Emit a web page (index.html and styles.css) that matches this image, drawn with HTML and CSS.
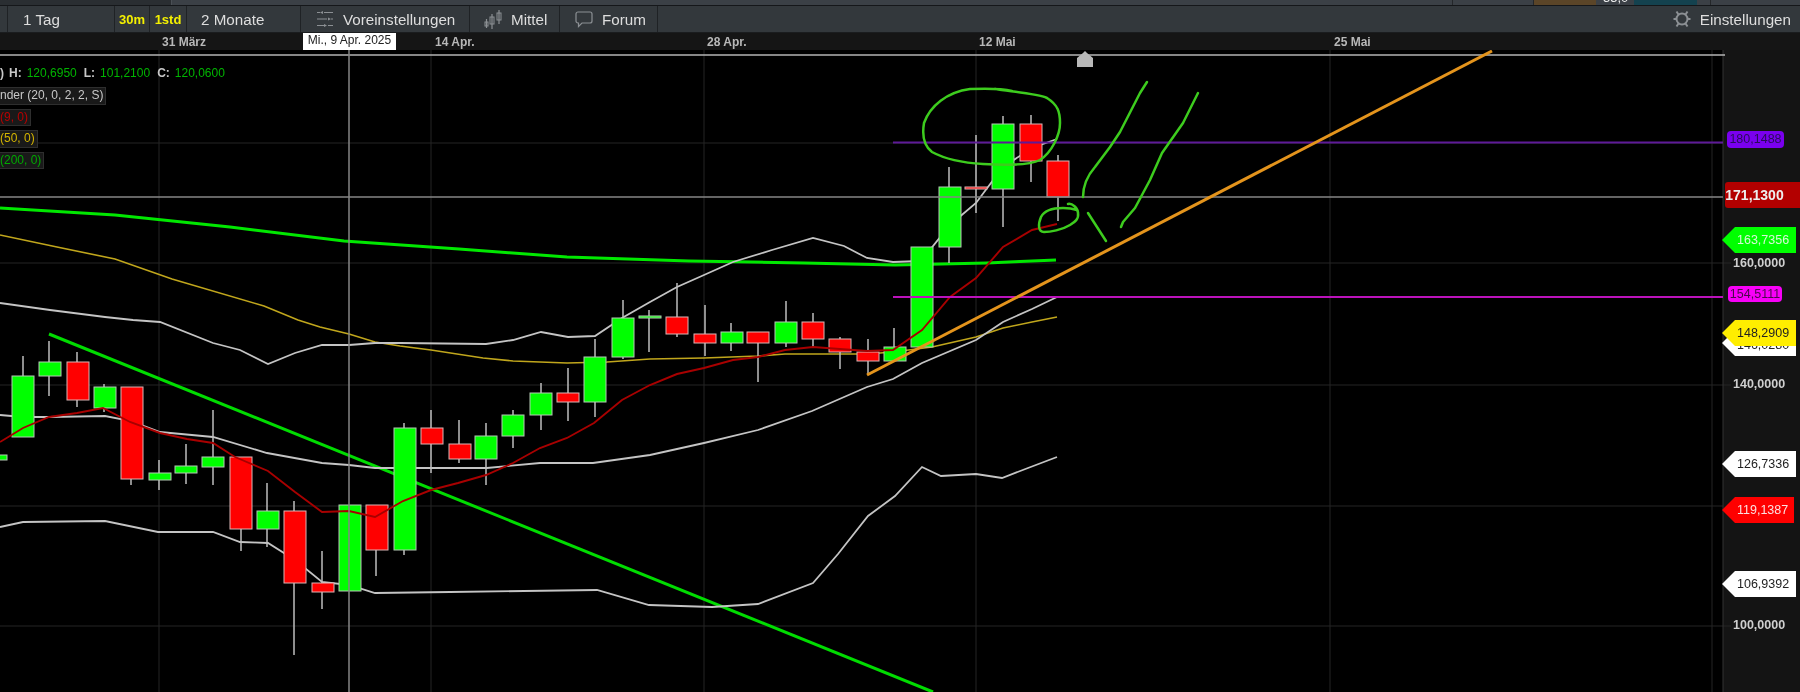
FILE: index.html
```html
<!DOCTYPE html>
<html lang="de">
<head>
    <meta charset="UTF-8">
    <title>Chart</title>
    <link rel="stylesheet" href="styles.css">
</head>
<body>

<div class="top-strip">
    <div class="strip-dark"></div>
    <div class="strip-cell strip-wide"></div>
    <div class="strip-cell strip-gap"></div>
    <div class="strip-brown"></div>
    <div class="strip-value"><span>55,0</span></div>
    <div class="strip-teal"></div>
    <div class="strip-cell strip-end"></div>
</div>

<div class="toolbar">
    <div class="tool tool-first"></div>
    <div class="tool tool-day">1 Tag</div>
    <div class="tool tool-short">30m</div>
    <div class="tool tool-hour">1std</div>
    <div class="tool tool-range">2 Monate</div>
    <div class="tool tool-presets">
        <svg class="icon" width="18" height="18" viewBox="0 0 18 18">
            <path d="M1 2.500h3M8 2.500h9M1 9h10M15 9h2M1 15.500h7M12 15.500h5" />
            <path class="fill" d="M7 1l-3 1.500 3 1.500zM12 7.500l3 1.500-3 1.500zM8 14l3 1.500-3 1.500z" />
        </svg>
        Voreinstellungen
    </div>
    <div class="tool tool-size">
        <svg class="icon" width="18" height="20" viewBox="0 0 18 20">
            <path d="M2.500 10v9M8 5v15M15 1v14" />
            <rect class="body" x="1" y="13" width="3" height="4" />
            <rect class="body" x="6" y="8" width="4" height="7" />
            <rect class="body" x="13" y="4" width="4" height="7" />
        </svg>
        Mittel
    </div>
    <div class="tool tool-forum">
        <svg class="icon" width="18" height="18" viewBox="0 0 18 18">
            <path d="M3 2h12a2 2 0 0 1 2 2v7a2 2 0 0 1-2 2H7l-3.500 3.500V13H3a2 2 0 0 1-2-2V4a2 2 0 0 1 2-2z" />
        </svg>
        Forum
    </div>
    <div class="tool-spacer"></div>
    <div class="settings">
        <svg class="icon gear" width="18" height="18" viewBox="0 0 18 18">
            <circle cx="9" cy="9" r="5.500" />
            <path d="M3.500 1.500l2 3M14.500 1.500l-2 3M3.500 16.500l2-3M14.500 16.500l-2-3M0.500 9h3M14.500 9h3" />
        </svg>
        Einstellungen
    </div>
</div>

<div class="time-axis">
    <span class="tick tick-mar">31 März</span>
    <span class="tick tick-apr14">14 Apr.</span>
    <span class="tick tick-apr28">28 Apr.</span>
    <span class="tick tick-may12">12 Mai</span>
    <span class="tick tick-may25">25 Mai</span>
    <span class="cross-date">Mi., 9 Apr. 2025</span>
</div>

<div class="chart">
    <div class="price-axis"></div>

    <svg class="plot" width="1800" height="642" viewBox="0 50 1800 642">
        <!-- grid -->
        <path class="grid" d="M159 33V692M431 33V692M704 33V692M976 33V692M1330 33V692M1712 33V692" />
        <path class="grid" d="M0 143H1723M0 263H1731M0 385H1731M0 506H1723M0 626H1731" />
        <path class="frame" d="M1723 50V692" />
        <path class="top-line" d="M0 55H1725" />

        <!-- drawn trend line, sits behind the candles -->
        <path class="trend-green" d="M49 334L933 692" />

        <!-- moving averages and bands -->
        <polyline class="sma200" points="0,208 115,215 230,227 344,241 459,249 567,257 689,261 804,263 895,265 987,263 1056,260" />
        <polyline class="sma50" points="0,235 57,247 115,259 172,279 264,306 298,320 320,327 349,334 375,342 400,346 431,350 483,358 513,361 567,363 607,362 650,359 704,358 758,356 785,354 867,354 893,352 932,347 976,337 1003,328 1032,322 1057,317" />
        <polyline class="band" points="0,303 50,310 105,317 133,320 160,322 213,343 240,350 268,364 295,353 322,345 349,345 375,343 400,343 486,344 513,340 541,332 568,337 595,336 622,318 650,302 677,287 704,275 733,262 772,250 813,238 844,246 867,258 893,262 921,261 950,225 976,203 1003,167 1032,148 1057,139" />
        <polyline class="band" points="0,415 23,417 49,417 105,416 131,421 160,432 213,437 267,453 322,463 349,465 375,468 431,468 487,468 540,463 593,463 650,455 704,443 758,430 812,411 867,387 893,379 922,363 976,340 1003,322 1032,309 1057,297" />
        <polyline class="band" points="0,527 23,522 105,521 158,532 213,532 240,542 268,543 295,560 322,582 349,585 375,593 450,592 597,590 649,605 712,607 758,604 813,583 838,554 868,516 895,496 922,467 941,476 976,474 1002,478 1028,468 1057,457" />

        <!-- wicks -->
        <path class="wick" d="M23 356V376M49 341V396M77 352V407M104 384V412M131 479V485M159 460V490M186 444V484M213 410V485M241 529V551M267 483V547M294 501V655M322 551V609M376 550V576M404 423V555M431 410V473M459 420V463M486 423V485M513 410V448M541 383V430M568 368V421M595 339V417M623 300V359M649 310V352M677 283V337M705 305V356M731 323V351M758 343V382M786 301V347M813 313V347M840 337V369M868 339V375M894 328V347M949 167V263M976 135V213M1003 116V227M1031 115V182M1058 155V221" />

        <!-- candle bodies -->
        <g class="up">
            <rect x="-10" y="455" width="17" height="5" />
            <rect x="12" y="376" width="22" height="61" />
            <rect x="39" y="362" width="22" height="14" />
            <rect x="94" y="387" width="22" height="21" />
            <rect x="149" y="473" width="22" height="7" />
            <rect x="175" y="466" width="22" height="7" />
            <rect x="202" y="457" width="22" height="10" />
            <rect x="257" y="511" width="22" height="18" />
            <rect x="339" y="505" width="22" height="86" />
            <rect x="394" y="428" width="22" height="122" />
            <rect x="475" y="436" width="22" height="23" />
            <rect x="502" y="415" width="22" height="21" />
            <rect x="530" y="393" width="22" height="22" />
            <rect x="584" y="357" width="22" height="45" />
            <rect x="612" y="318" width="22" height="39" />
            <rect x="639" y="316" width="22" height="2" />
            <rect x="721" y="332" width="22" height="11" />
            <rect x="775" y="322" width="22" height="21" />
            <rect x="884" y="347" width="22" height="14" />
            <rect x="911" y="247" width="22" height="100" />
            <rect x="939" y="187" width="22" height="60" />
            <rect x="992" y="124" width="22" height="65" />
        </g>
        <g class="down">
            <rect x="67" y="362" width="22" height="38" />
            <rect x="121" y="387" width="22" height="92" />
            <rect x="230" y="457" width="22" height="72" />
            <rect x="284" y="511" width="22" height="72" />
            <rect x="312" y="583" width="22" height="9" />
            <rect x="366" y="505" width="22" height="45" />
            <rect x="421" y="428" width="22" height="16" />
            <rect x="449" y="444" width="22" height="15" />
            <rect x="557" y="393" width="22" height="9" />
            <rect x="666" y="317" width="22" height="17" />
            <rect x="694" y="334" width="22" height="9" />
            <rect x="747" y="332" width="22" height="11" />
            <rect x="802" y="322" width="22" height="17" />
            <rect x="829" y="339" width="22" height="13" />
            <rect x="857" y="352" width="22" height="9" />
            <rect x="965" y="187" width="22" height="2" />
            <rect x="1020" y="124" width="22" height="37" />
            <rect x="1047" y="161" width="22" height="36" />
        </g>

        <polyline class="sma9" points="0,442 23,428 49,417 77,413 103,408 130,422 160,433 187,439 213,443 235,457 268,471 295,492 322,512 349,511 375,517 403,501 431,490 458,483 486,475 513,463 540,448 567,438 594,423 622,400 650,385 677,374 704,368 733,360 758,357 785,350 813,347 840,349 867,351 893,350 922,330 950,297 976,278 1003,247 1032,230 1057,224" />

        <!-- crosshair and horizontal tools -->
        <path class="cross" d="M349 50V692M0 197H1723" />
        <path class="level-purple" d="M893 142.500H1723" />
        <path class="level-magenta" d="M893 297H1723" />
        <path class="trend-orange" d="M867 375L1492 51" />
        <path class="marker" d="M1077 67V58L1083 53L1085 51L1087 53L1093 58V67Z" />

        <!-- hand drawn marks -->
        <g class="ink">
            <path d="M1012 91C1004 89 993 88 970 89C947 92 930 106 924 123C922 135 924 146 932 152C945 159 965 163 983 164C1000 165 1028 166 1040 160C1052 152 1060 135 1060 123C1060 112 1058 105 1047 98C1038 94 1015 92 995 89" />
            <path d="M1068 204C1072 203 1078 208 1078 213C1079 219 1075 222 1070 225C1062 230 1050 232 1044 232C1038 232 1038 224 1041 217C1044 211 1050 208 1063 208C1069 208 1074 209 1077 210" />
            <path d="M1147 82L1140 93L1120 132L1110 147L1095 167C1088 175 1083 186 1083 197" />
            <path d="M1198 93L1183 123L1162 153L1150 180L1135 208L1123 222L1121 227" />
            <path d="M1088 213L1106 241" />
        </g>
    </svg>

    <div class="ohlc">
        <span class="ohlc-key">)</span>
        <span class="ohlc-key">H:</span>
        <span class="ohlc-val">120,6950</span>
        <span class="ohlc-key">L:</span>
        <span class="ohlc-val">101,2100</span>
        <span class="ohlc-key">C:</span>
        <span class="ohlc-val">120,0600</span>
    </div>

    <div class="legend">
        <div class="legend-item legend-bands">nder (20, 0, 2, 2, S)</div>
        <div class="legend-item legend-red">(9, 0)</div>
        <div class="legend-item legend-yellow">(50, 0)</div>
        <div class="legend-item legend-green">(200, 0)</div>
    </div>

    <span class="tag tag-purple">180,1488</span>
    <span class="tag tag-last">171,1300</span>
    <span class="tag arrow tag-sma200">163,7356</span>
    <span class="axis-num num-160">160,0000</span>
    <span class="tag tag-magenta">154,5111</span>
    <span class="tag arrow tag-white tag-146">146,0280</span>
    <span class="tag arrow tag-sma50">148,2909</span>
    <span class="axis-num num-140">140,0000</span>
    <span class="tag arrow tag-white tag-126">126,7336</span>
    <span class="tag arrow tag-sma9">119,1387</span>
    <span class="tag arrow tag-white tag-106">106,9392</span>
    <span class="axis-num num-100">100,0000</span>
</div>

</body>
</html>
```

FILE: styles.css
```css
* {
    box-sizing: border-box;
}
html, body {
    margin: 0;
    height: 692px;
    overflow: hidden;
}
body {
    background-color: #000;
    font-family: "Liberation Sans", Arial, sans-serif;
    color: #ddd;
    filter: blur(0.35px);
}

/* strip of the window above the chart */
.top-strip {
    display: flex;
    height: 6px;
    background-color: #3b4046;
    border-bottom: 1px solid #15171a;
    overflow: hidden;
}
.strip-dark { width: 172px; background-color: #2a2e32; border-right: 1px solid #4a4f55; }
.strip-cell { border-right: 1px solid #24272a; }
.strip-wide { width: 1281px; }
.strip-gap { width: 81px; }
.strip-brown { width: 62px; background-color: #5b4528; }
.strip-value { width: 38px; background-color: #3b4046; padding-left: 7px; }
.strip-value span { display: block; margin-top: -9px; font-size: 13px; line-height: 13px; color: #eee; }
.strip-teal { width: 63px; background-color: #14424f; }
.strip-end { width: 14px; }

/* toolbar */
.toolbar {
    display: flex;
    align-items: stretch;
    height: 27px;
    background-color: #33383c;
    border-bottom: 1px solid #1a1c1e;
    font-size: 15.200px;
}
.tool {
    display: flex;
    align-items: center;
    border-right: 1px solid #1f2225;
    color: #dedede;
}
.tool-first { width: 8px; }
.tool-day { width: 107px; padding-left: 15px; }
.tool-short, .tool-hour {
    justify-content: center;
    color: #f4f000;
    font-weight: bold;
    font-size: 13px;
}
.tool-short { width: 35px; }
.tool-hour { width: 37px; }
.tool-range { width: 114px; padding-left: 14px; }
.tool-presets { width: 169px; padding-left: 15px; gap: 9px; }
.tool-size { width: 90px; padding-left: 14px; gap: 9px; }
.tool-forum { width: 98px; padding-left: 15px; gap: 9px; }
.tool-spacer { flex: 1; }
.settings {
    display: flex;
    align-items: center;
    gap: 9px;
    padding-right: 9px;
    color: #dedede;
}
.icon { flex: none; }
.icon path, .icon rect, .icon circle {
    fill: none;
    stroke: #8c9094;
    stroke-width: 1.2;
}
.icon .fill { fill: #8c9094; stroke: none; }
.icon .body { stroke-width: 1; }
.gear circle, .gear path { stroke-width: 2; }

/* date row */
.time-axis {
    position: relative;
    height: 17px;
    background-color: #151515;
    font-size: 12px;
    color: #b8b8b8;
}
.tick {
    position: absolute;
    top: 2px;
    line-height: 15px;
    font-weight: bold;
    font-size: 12px;
}
.tick-mar { left: 162px; }
.tick-apr14 { left: 435px; }
.tick-apr28 { left: 707px; }
.tick-may12 { left: 979px; }
.tick-may25 { left: 1334px; }
.cross-date {
    position: absolute;
    left: 303px;
    top: 0;
    width: 93px;
    height: 17px;
    background-color: #fff;
    color: #222;
    font-size: 12px;
    line-height: 14px;
    text-align: center;
}

/* chart */
.chart {
    position: relative;
    height: 642px;
    background-color: #000;
    overflow: hidden;
}
.price-axis {
    position: absolute;
    top: 0;
    right: 0;
    bottom: 0;
    width: 77px;
    background-color: #141414;
}
.plot {
    position: absolute;
    left: 0;
    top: 0;
    display: block;
}
.plot path, .plot polyline { fill: none; }
.grid { stroke: #242424; stroke-width: 1; }
.frame { stroke: #333; stroke-width: 1; }
.top-line { stroke: #b4b4b4; stroke-width: 1.600; }
.trend-green { stroke: #00dc00; stroke-width: 3; }
.sma200 { stroke: #00e800; stroke-width: 3; }
.sma50 { stroke: #c0a61c; stroke-width: 1.600; }
.band { stroke: #c4c4c4; stroke-width: 1.800; }
.sma9 { stroke: #a80000; stroke-width: 1.900; }
.wick { stroke: #bdbdbd; stroke-width: 1.500; }
.up rect { fill: #00ff00; stroke: #b5c9b5; stroke-width: 1; }
.down rect { fill: #ff0000; stroke: #d9b5b5; stroke-width: 1; }
.cross { stroke: #858585; stroke-width: 1.500; }
.level-purple { stroke: #5e1a98; stroke-width: 1.800; }
.level-magenta { stroke: #bb12bb; stroke-width: 1.800; }
.trend-orange { stroke: #e4941c; stroke-width: 3; }
.plot .marker { fill: #b8b8b8; }
.ink path {
    stroke: #3dcc1e;
    stroke-width: 2.500;
    stroke-linecap: round;
    stroke-linejoin: round;
}

.ohlc {
    position: absolute;
    left: 0;
    top: 16px;
    display: flex;
    gap: 5px;
    font-size: 12px;
    line-height: 14px;
    white-space: nowrap;
}
.ohlc-key { font-weight: bold; color: #c8c8c8; }
.ohlc-val { color: #00b400; margin-right: 2px; }
.legend {
    position: absolute;
    left: 0;
    top: 37px;
    display: flex;
    flex-direction: column;
    align-items: flex-start;
    gap: 4px;
    font-size: 12px;
}
.legend-item {
    height: 17.500px;
    line-height: 15.500px;
    padding-right: 2px;
    background-color: #191919;
    border: 1px solid #2e2e2e;
    border-left: none;
}
.legend-bands { color: #c8c8c8; }
.legend-red { color: #b80000; }
.legend-yellow { color: #d4b400; }
.legend-green { color: #00a800; }

/* price labels, placed by their value */
.tag {
    position: absolute;
    font-size: 12.500px;
    text-align: center;
    color: #222;
}
.tag-purple {
    left: 1727px;
    top: 81px;
    width: 57px;
    height: 17px;
    line-height: 17px;
    background-color: #7a00ee;
    border-radius: 4px;
    color: #2a0a5a;
}
.tag-last {
    left: 1725px;
    top: 132px;
    width: 75px;
    height: 26px;
    padding-right: 16px;
    line-height: 26px;
    background-color: #b30000;
    border-radius: 3px 0 0 3px;
    color: #eee;
    font-size: 14px;
    font-weight: bold;
}
.tag-magenta {
    left: 1728px;
    top: 236px;
    width: 54px;
    height: 16px;
    line-height: 16px;
    background-color: #f800f8;
    border-radius: 4px;
    color: #4a0a4a;
}
.arrow {
    left: 1722px;
    width: 74px;
    height: 26px;
    padding-left: 15px;
    line-height: 26px;
    text-align: left;
    clip-path: polygon(0 50%, 13px 0, 100% 0, 100% 100%, 13px 100%);
}
.tag-white { background-color: #fff; }
.tag-sma200 { top: 177px; background-color: #00ff00; color: #d8f5d8; }
.tag-146 { top: 280px; line-height: 30px; }
.tag-sma50 { top: 270px; background-color: #ffee00; }
.tag-126 { top: 401px; }
.tag-sma9 { top: 447px; width: 72px; background-color: #ff0000; color: #fbe0e0; }
.tag-106 { top: 521px; }
.axis-num {
    position: absolute;
    left: 1733px;
    font-size: 12.500px;
    line-height: 14px;
    font-weight: bold;
    color: #cfcfcf;
}
.num-160 { top: 206px; }
.num-140 { top: 327px; }
.num-100 { top: 568px; }
```
